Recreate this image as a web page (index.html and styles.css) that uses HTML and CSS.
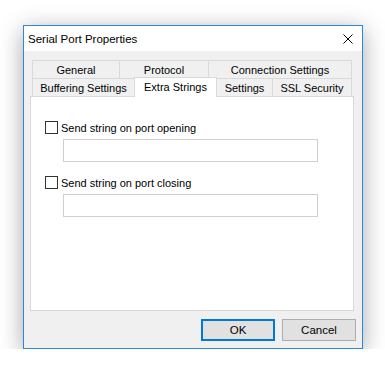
FILE: index.html
```html
<!DOCTYPE html>
<html lang="en">
<head>
    <meta charset="UTF-8">
    <meta name="viewport" content="width=device-width, initial-scale=1.0">
    <title>Serial Port Properties</title>
    <link rel="stylesheet" href="styles.css">
</head>
<body>
    <div class="dialog">
        <div class="titlebar">
            <span class="title">Serial Port Properties</span>
            <svg class="close" width="10" height="10" viewBox="0 0 10 10">
                <path d="M0.5 0.5 L9.5 9.5 M9.5 0.5 L0.5 9.5" stroke="#000" stroke-width="1" fill="none"/>
            </svg>
        </div>

        <div class="client">
            <div class="tabs">
                <div class="tab-row">
                    <div class="tab tab-general">General</div>
                    <div class="tab tab-protocol">Protocol</div>
                    <div class="tab tab-connection last">Connection Settings</div>
                </div>
                <div class="tab-row">
                    <div class="tab tab-buffering">Buffering Settings</div>
                    <div class="tab tab-extra active">Extra Strings</div>
                    <div class="tab tab-settings">Settings</div>
                    <div class="tab tab-ssl last">SSL Security</div>
                </div>
            </div>

            <div class="panel">
                <div class="option">
                    <label class="check-row">
                        <span class="checkbox"></span>
                        <span>Send string on port opening</span>
                    </label>
                    <div class="text-field"></div>
                </div>
                <div class="option">
                    <label class="check-row">
                        <span class="checkbox"></span>
                        <span>Send string on port closing</span>
                    </label>
                    <div class="text-field"></div>
                </div>
            </div>

            <div class="buttons">
                <button class="btn btn-default">OK</button>
                <button class="btn">Cancel</button>
            </div>
        </div>
    </div>
</body>
</html>
```

FILE: styles.css
```css
body {
    margin: 0;
    padding: 25px 0 0 23px;
    background: #fff;
    font-family: "Liberation Sans", Arial, sans-serif;
    font-size: 11px;
    color: #000;
}

.dialog {
    width: 338px;
    height: 322px;
    border: 1px solid #2b88d8;
    background: #f0f0f0;
    box-shadow: 0 5px 22px rgba(0, 0, 0, 0.35);
    display: flex;
    flex-direction: column;
}

.titlebar {
    height: 25px;
    background: #fff;
    display: flex;
    align-items: center;
    justify-content: space-between;
    padding-left: 4px;
}

.title {
    font-size: 11.5px;
}

.close {
    margin-right: 9px;
}

.client {
    flex: 1;
    display: flex;
    flex-direction: column;
    padding: 9px 6px 7px 6px;
}

/* tabs */
.tabs {
    margin: 0 4px 0 2px;
}

.tab-row {
    display: flex;
    height: 18px;
    align-items: flex-start;
}

.tab {
    flex: none;
    height: 18px;
    box-sizing: border-box;
    border-top: 1px solid #d9d9d9;
    border-left: 1px solid #d9d9d9;
    display: flex;
    align-items: center;
    justify-content: center;
}

.tab.last {
    border-right: 1px solid #d9d9d9;
}

.tab-general { width: 87px; }
.tab-protocol { width: 89px; }
.tab-connection { width: 144px; }
.tab-buffering { width: 102px; }
.tab-settings { width: 55px; border-left: none; }
.tab-ssl { width: 80px; }

.tab.active {
    width: 83px;
    height: 20px;
    margin-top: -1px;
    background: #fff;
    border-right: 1px solid #d9d9d9;
    position: relative;
    z-index: 1;
    padding-bottom: 2px;
}

/* page */
.panel {
    flex: 1;
    margin-right: 2px;
    background: #fff;
    border: 1px solid #d9d9d9;
    padding: 24px 0 0 14px;
}

.option {
    margin-bottom: 14px;
}

.check-row {
    display: flex;
    align-items: center;
    gap: 3px;
    height: 13px;
}

.checkbox {
    width: 13px;
    height: 13px;
    box-sizing: border-box;
    border: 1px solid #333;
    background: #fff;
}

.text-field {
    width: 255px;
    height: 23px;
    box-sizing: border-box;
    margin: 5px 0 0 18px;
    border: 1px solid #cfcfcf;
    background: #fff;
}

/* buttons */
.buttons {
    display: flex;
    justify-content: flex-end;
    gap: 7px;
    margin-top: 8px;
}

.btn {
    width: 74px;
    height: 22px;
    box-sizing: border-box;
    border: 1px solid #adadad;
    background: #e1e1e1;
    font-family: inherit;
    font-size: 11.5px;
    color: #000;
    padding: 0;
}

.btn-default {
    border: 2px solid #0078d7;
}
```
